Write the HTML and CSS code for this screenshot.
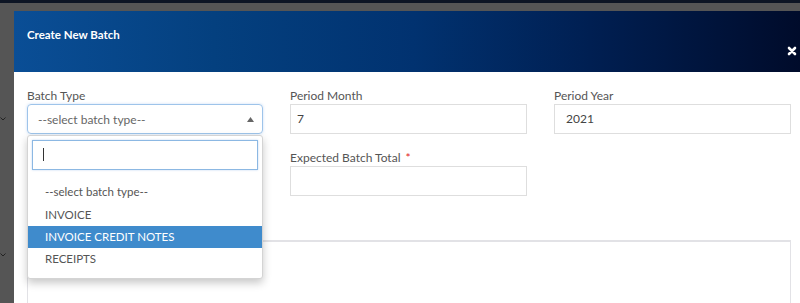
FILE: index.html
```html
<!DOCTYPE html>
<html>
<head>
    <title>Create New Batch</title>
    <link rel="stylesheet" href="styles.css">
</head>
<body>
    <div class="topstrip"></div>
    <div class="stage">
        <div class="edge">
            <svg class="chev chev-one" width="6" height="4" viewBox="0 0 6 4"><polyline points="0.5,0.5 3,3 5.5,0.5" fill="none" stroke="#222" stroke-width="1"/></svg>
            <svg class="chev chev-two" width="6" height="4" viewBox="0 0 6 4"><polyline points="0.5,0.5 3,3 5.5,0.5" fill="none" stroke="#222" stroke-width="1"/></svg>
        </div>
        <div class="modal">
            <div class="modal-header">
                <h4 class="modal-title">Create New Batch</h4>
                <svg class="close" width="10" height="10" viewBox="0 0 10 10"><path d="M2 2 L8 8 M8 2 L2 8" stroke="#fff" stroke-width="2.6" stroke-linecap="round"/></svg>
            </div>
            <div class="modal-body">
                <div class="form-grid">
                    <div class="form-group">
                        <label>Batch Type</label>
                        <div class="select-box">
                            <span>--select batch type--</span>
                            <svg width="7" height="5" viewBox="0 0 7 5"><polygon points="0,5 3.5,0 7,5" fill="#666"/></svg>
                        </div>
                        <div class="dropdown">
                            <div class="search-box"><span class="caret"></span></div>
                            <ul class="options">
                                <li>--select batch type--</li>
                                <li>INVOICE</li>
                                <li class="active">INVOICE CREDIT NOTES</li>
                                <li>RECEIPTS</li>
                            </ul>
                        </div>
                    </div>
                    <div class="form-group">
                        <label>Period Month</label>
                        <div class="input month">7</div>
                    </div>
                    <div class="form-group">
                        <label>Period Year</label>
                        <div class="input year">2021</div>
                    </div>
                    <div class="form-group">
                        <label>Batch Date</label>
                        <div class="input"></div>
                    </div>
                    <div class="form-group">
                        <label>Expected Batch Total <span class="req">*</span></label>
                        <div class="input"></div>
                    </div>
                </div>
                <div class="notes-box"></div>
            </div>
        </div>
    </div>
</body>
</html>
```
FILE: styles.css
```css
body {
    margin: 0;
    background: #555;
    font-family: Lato, "Open Sans", sans-serif;
    overflow: hidden;
    height: 303px;
}
.topstrip {
    height: 3px;
    background: #0d1524;
}
.stage {
    display: flex;
}
.edge {
    width: 14px;
    flex-shrink: 0;
    display: flex;
    flex-direction: column;
}
.chev-one {
    margin-top: 114px;
}
.chev-two {
    margin-top: 132px;
}
.modal {
    margin-top: 8px;
    width: 800px;
    flex-shrink: 0;
    background: #fff;
    height: 292px;
    overflow: hidden;
}
.modal-header {
    height: 61px;
    box-sizing: border-box;
    padding: 0 13px;
    display: flex;
    justify-content: space-between;
    background: linear-gradient(to right, #0a4e96 0%, #04407f 25%, #013270 50%, #001f52 72%, #000a28 100%);
    color: #fff;
}
.modal-title {
    margin: 0;
    padding-top: 17px;
    font-size: 11.5px;
    font-weight: 700;
}
.close {
    margin-top: 35px;
    margin-right: 4px;
}
.modal-body {
    padding: 15px 13px 0;
}
.form-grid {
    display: grid;
    grid-template-columns: 236px 237px 237px;
    column-gap: 27px;
    row-gap: 15px;
}
.form-group {
    position: relative;
}
label {
    display: block;
    height: 17px;
    font-size: 12px;
    color: #555;
    line-height: 17px;
}
.req {
    color: #e21b1b;
    margin-left: 2px;
}
.input {
    height: 30px;
    box-sizing: border-box;
    border: 1px solid #dedede;
    font-size: 12px;
    color: #444;
    line-height: 28px;
    padding: 0 6px;
}
.input.year {
    padding-left: 11px;
}
.select-box {
    height: 30px;
    box-sizing: border-box;
    border: 1px solid #9ec4ea;
    border-radius: 4px;
    box-shadow: 0 0 3px rgba(102, 160, 225, 0.35);
    display: flex;
    align-items: center;
    justify-content: space-between;
    padding: 0 8px 0 10px;
    font-size: 12px;
    color: #666;
}
.dropdown {
    position: absolute;
    top: 48px;
    left: 0;
    width: 236px;
    height: 144px;
    box-sizing: border-box;
    background: #fff;
    border: 1px solid #d4d4d4;
    border-radius: 3px;
    box-shadow: 0 4px 9px rgba(0, 0, 0, 0.22);
    padding: 4px;
    z-index: 2;
}
.search-box {
    height: 30px;
    box-sizing: border-box;
    border: 1px solid #8cb8e3;
    box-shadow: 0 0 2px rgba(102, 160, 225, 0.4);
    padding: 7px 10px;
}
.caret {
    display: block;
    width: 1px;
    height: 13px;
    background: #333;
}
.options {
    list-style: none;
    margin: 11px -4px 0;
    padding: 0;
}
.options li {
    height: 22px;
    line-height: 22px;
    padding-left: 17px;
    font-size: 11.5px;
    color: #555;
}
.options li:first-child {
    height: 23px;
}
.options li.active {
    background: #3f8bcc;
    color: #fff;
}
.notes-box {
    margin-top: 44px;
    width: 764px;
    height: 80px;
    box-sizing: border-box;
    border: 1px solid #e2e2e6;
    border-width: 2px 1px 1px;
}
```
